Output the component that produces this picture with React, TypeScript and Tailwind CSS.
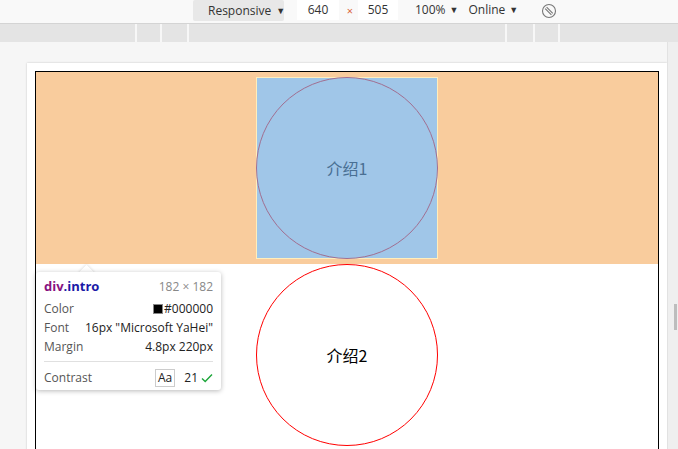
import React from 'react'

const ui = { fontFamily: '"Open Sans", "Noto Sans", sans-serif' }
const cjk = { fontFamily: '"Noto Sans CJK SC", "Noto Sans", sans-serif' }

function RotateIcon() {
  return (
    <svg width="16" height="16" viewBox="0 0 16 16" fill="none" stroke="#777" strokeWidth="1.1">
      <circle cx="8" cy="8" r="6.5" />
      <path d="M4.2 5.6 L10.4 11.8 M5.6 4.2 L11.8 10.4" />
    </svg>
  )
}

function Toolbar() {
  return (
    <div className="h-[24px] bg-[#f9f9f9] border-b border-[#d4d4d4] flex items-start text-[12px] text-[#333]" style={ui}>
      <div className="ml-[193px] w-[91px] h-[21px] bg-[#e8e8e8] rounded-[2px] flex items-center pl-[15px]">
        Responsive <span className="ml-[5px] text-[9px]">▼</span>
      </div>
      <div className="ml-[13px] w-[42px] h-[20px] bg-white flex items-center justify-center">640</div>
      <div className="ml-[5px] w-[12px] h-[20px] flex items-center justify-center text-[11px] text-[#d9643a] pt-[2px]">×</div>
      <div className="ml-[2px] w-[40px] h-[20px] bg-white flex items-center justify-center">505</div>
      <div className="ml-[17px] h-[20px] flex items-center">
        100% <span className="ml-[4px] text-[9px]">▼</span>
      </div>
      <div className="ml-[10px] h-[20px] flex items-center">
        Online <span className="ml-[4px] text-[9px]">▼</span>
      </div>
      <div className="ml-[23px] h-[21px] flex items-center">
        <RotateIcon />
      </div>
    </div>
  )
}

function Ruler() {
  const tick = <div className="w-[2px] bg-[#f7f7f7]" />
  return (
    <div className="h-[18px] bg-[#e4e4e4] flex">
      <div className="w-[135px]" />
      {tick}
      <div className="w-[23px]" />
      {tick}
      <div className="w-[25px]" />
      {tick}
      <div className="w-[316px]" />
      {tick}
      <div className="w-[26px]" />
      {tick}
      <div className="w-[23px]" />
      {tick}
      <div className="flex-1" />
    </div>
  )
}

function Tooltip() {
  return (
    <div className="absolute left-[36px] top-[272px] w-[185px] h-[118px]" style={ui}>
      <div className="absolute left-[45px] top-[-5px] w-[11px] h-[11px] rotate-45 bg-white shadow-[0_0_3px_rgba(0,0,0,0.18)]" />
      <div className="relative h-full bg-white rounded-[3px] shadow-[0_1px_5px_rgba(0,0,0,0.28)] px-[8px] pt-[6px] text-[12px] text-[#555]">
        <div className="relative flex justify-between items-center h-[18px]">
          <span className="font-bold text-[13px]">
            <span className="text-[#881280]">div</span>
            <span className="text-[#1a1aa6]">.intro</span>
          </span>
          <span className="text-[#888]">182 × 182</span>
        </div>
        <div className="flex justify-between items-center h-[19px] mt-[3px]">
          <span>Color</span>
          <span className="flex items-center text-[#222]">
            <span className="w-[10px] h-[10px] bg-black border border-[#888] mr-[1px]" />#000000
          </span>
        </div>
        <div className="flex justify-between items-center h-[19px]">
          <span>Font</span>
          <span className="text-[#222]">16px "Microsoft YaHei"</span>
        </div>
        <div className="flex justify-between items-center h-[19px]">
          <span>Margin</span>
          <span className="text-[#222]">4.8px 220px</span>
        </div>
        <div className="h-px bg-[#e0e0e0] mt-[5px]" />
        <div className="flex justify-between items-center h-[22px] mt-[5px]">
          <span>Contrast</span>
          <span className="flex items-center text-[#222]">
            <span className="border border-[#ccc] px-[2px] h-[18px] flex items-center">Aa</span>
            <span className="ml-[9px]">21</span>
            <svg className="ml-[3px]" width="12" height="10" viewBox="0 0 12 10" fill="none" stroke="#1da63a" strokeWidth="1.4">
              <path d="M1 5.5 L4.2 8.5 L11 1.5" />
            </svg>
          </span>
        </div>
      </div>
    </div>
  )
}

function Page() {
  return (
    <div className="w-[640px] h-[420px] bg-white shadow-[0_0_2px_rgba(0,0,0,0.2)] pt-[8px] px-[8px]">
      <div className="h-full border border-black border-b-0">
        <div className="bg-[#f9cc9d] px-[220px] py-[4.8px]">
          <div className="relative w-[182px] h-[182px] bg-[#a0c6e8] border border-[#ffeebc]">
            <div className="absolute -inset-px rounded-full border border-[#a06f91] flex items-center justify-center text-[16px] text-[#496f93]" style={cjk}>
              介绍1
            </div>
          </div>
        </div>
        <div className="ml-[220px] w-[182px] h-[182px] rounded-full border border-[#ff0000] flex items-center justify-center text-[16px] text-black" style={cjk}>
          介绍2
        </div>
      </div>
    </div>
  )
}

export default function App() {
  return (
    <div className="relative w-[678px] h-[449px] overflow-hidden bg-[#f6f6f6]">
      <Toolbar />
      <Ruler />
      <div className="flex h-[407px]">
        <div className="flex-1 pl-[27px] pt-[21px]">
          <Page />
        </div>
        <div className="w-[11px] bg-[#efefef] border-l border-[#e2e2e2] pl-[6px] pt-[262px]">
          <div className="w-[3px] h-[26px] bg-[#bdbdbd]" />
        </div>
      </div>
      <Tooltip />
    </div>
  )
}
